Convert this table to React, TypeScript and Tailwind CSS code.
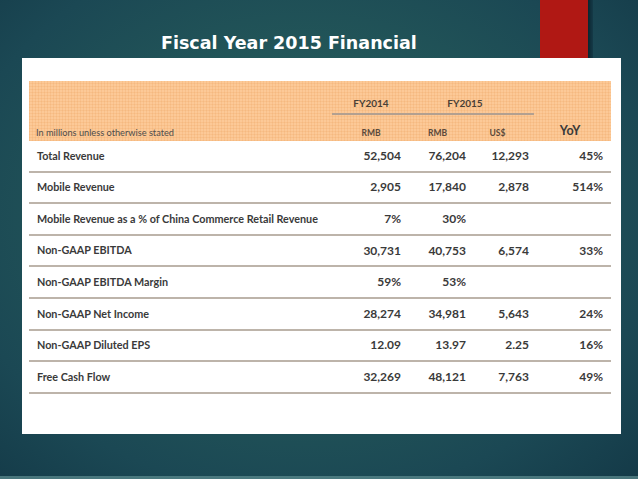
import React from "react";

type Row = { label: string; a: string; b: string; c: string; d: string };

const rows: Row[] = [
  { label: "Total Revenue", a: "52,504", b: "76,204", c: "12,293", d: "45%" },
  { label: "Mobile Revenue", a: "2,905", b: "17,840", c: "2,878", d: "514%" },
  { label: "Mobile Revenue as a % of China Commerce Retail Revenue", a: "7%", b: "30%", c: "", d: "" },
  { label: "Non-GAAP EBITDA", a: "30,731", b: "40,753", c: "6,574", d: "33%" },
  { label: "Non-GAAP EBITDA Margin", a: "59%", b: "53%", c: "", d: "" },
  { label: "Non-GAAP Net Income", a: "28,274", b: "34,981", c: "5,643", d: "24%" },
  { label: "Non-GAAP Diluted EPS", a: "12.09", b: "13.97", c: "2.25", d: "16%" },
  { label: "Free Cash Flow", a: "32,269", b: "48,121", c: "7,763", d: "49%" },
];

const cols = "grid grid-cols-[312px_60px_65px_63px_82px]";

export default function App() {
  return (
    <div className="relative w-[638px] h-[479px] overflow-hidden flex flex-col bg-[radial-gradient(ellipse_at_48%_45%,#2d6566_0%,#235759_40%,#1b4854_75%,#143a48_100%)]">
      {/* top bar */}
      <div className="flex h-[58px] shrink-0">
        <div className="w-[540px] flex items-end pl-[161px] pb-[6px]">
          <span className="text-white font-bold text-[17.5px] leading-none font-['DejaVu_Sans',sans-serif]">
            Fiscal Year 2015 Financial
          </span>
        </div>
        <div className="w-[48px] h-full bg-[#b01814]" />
        <div className="w-[5px] h-full bg-[linear-gradient(90deg,#0b2630,#153a48)]" />
      </div>

      {/* white panel */}
      <div className="ml-[22px] w-[599px] h-[376px] bg-white pt-[23px] pl-[7px] pr-[10px] shrink-0 font-['Lato',sans-serif] text-[#3a3a3a]">
        {/* header */}
        <div className="h-[60px] flex flex-col bg-[#fcc997] bg-[linear-gradient(90deg,rgba(235,160,95,0.22)_1px,transparent_1px),linear-gradient(0deg,rgba(235,160,95,0.22)_1px,transparent_1px)] bg-[size:3px_3px]">
          <div className={`${cols} pt-[15px] h-[29px] text-[10px] font-bold text-[#4a4036] leading-[14px]`}>
            <div />
            <div className="text-center">FY2014</div>
            <div className="col-span-2 text-center">FY2015</div>
            <div />
          </div>
          <div className="mt-[3px] ml-[303px] w-[202px] h-[2px] bg-[#b3a090]" />
          <div className={`${cols} mt-[8px] h-[16px] items-end text-[8.5px] font-bold text-[#5a4a3c] leading-[14px]`}>
            <div className="pl-[7px] font-normal text-[9.2px] text-[#4d4d4d] whitespace-nowrap">In millions unless otherwise stated</div>
            <div className="text-center">RMB</div>
            <div className="text-center pl-[8px]">RMB</div>
            <div className="text-center">US$</div>
            <div className="text-center text-[12.5px] font-bold text-[#3a3a3a] leading-[16px] pb-[1px]">YoY</div>
          </div>
        </div>

        {/* body rows */}
        {rows.map((r) => (
          <div
            key={r.label}
            className={`${cols} h-[31.6px] items-center border-b-2 border-[#bdb4aa] text-[10.8px] font-bold`}
          >
            <div className="pl-[8px] whitespace-nowrap">{r.label}</div>
            <div className="text-right text-[12px]">{r.a}</div>
            <div className="text-right text-[12px]">{r.b}</div>
            <div className="text-right text-[12px]">{r.c}</div>
            <div className="text-right pr-[8px] text-[12px]">{r.d}</div>
          </div>
        ))}
      </div>

      <div className="mt-auto h-[3px] bg-[#5f8f92] opacity-70" />
    </div>
  );
}
